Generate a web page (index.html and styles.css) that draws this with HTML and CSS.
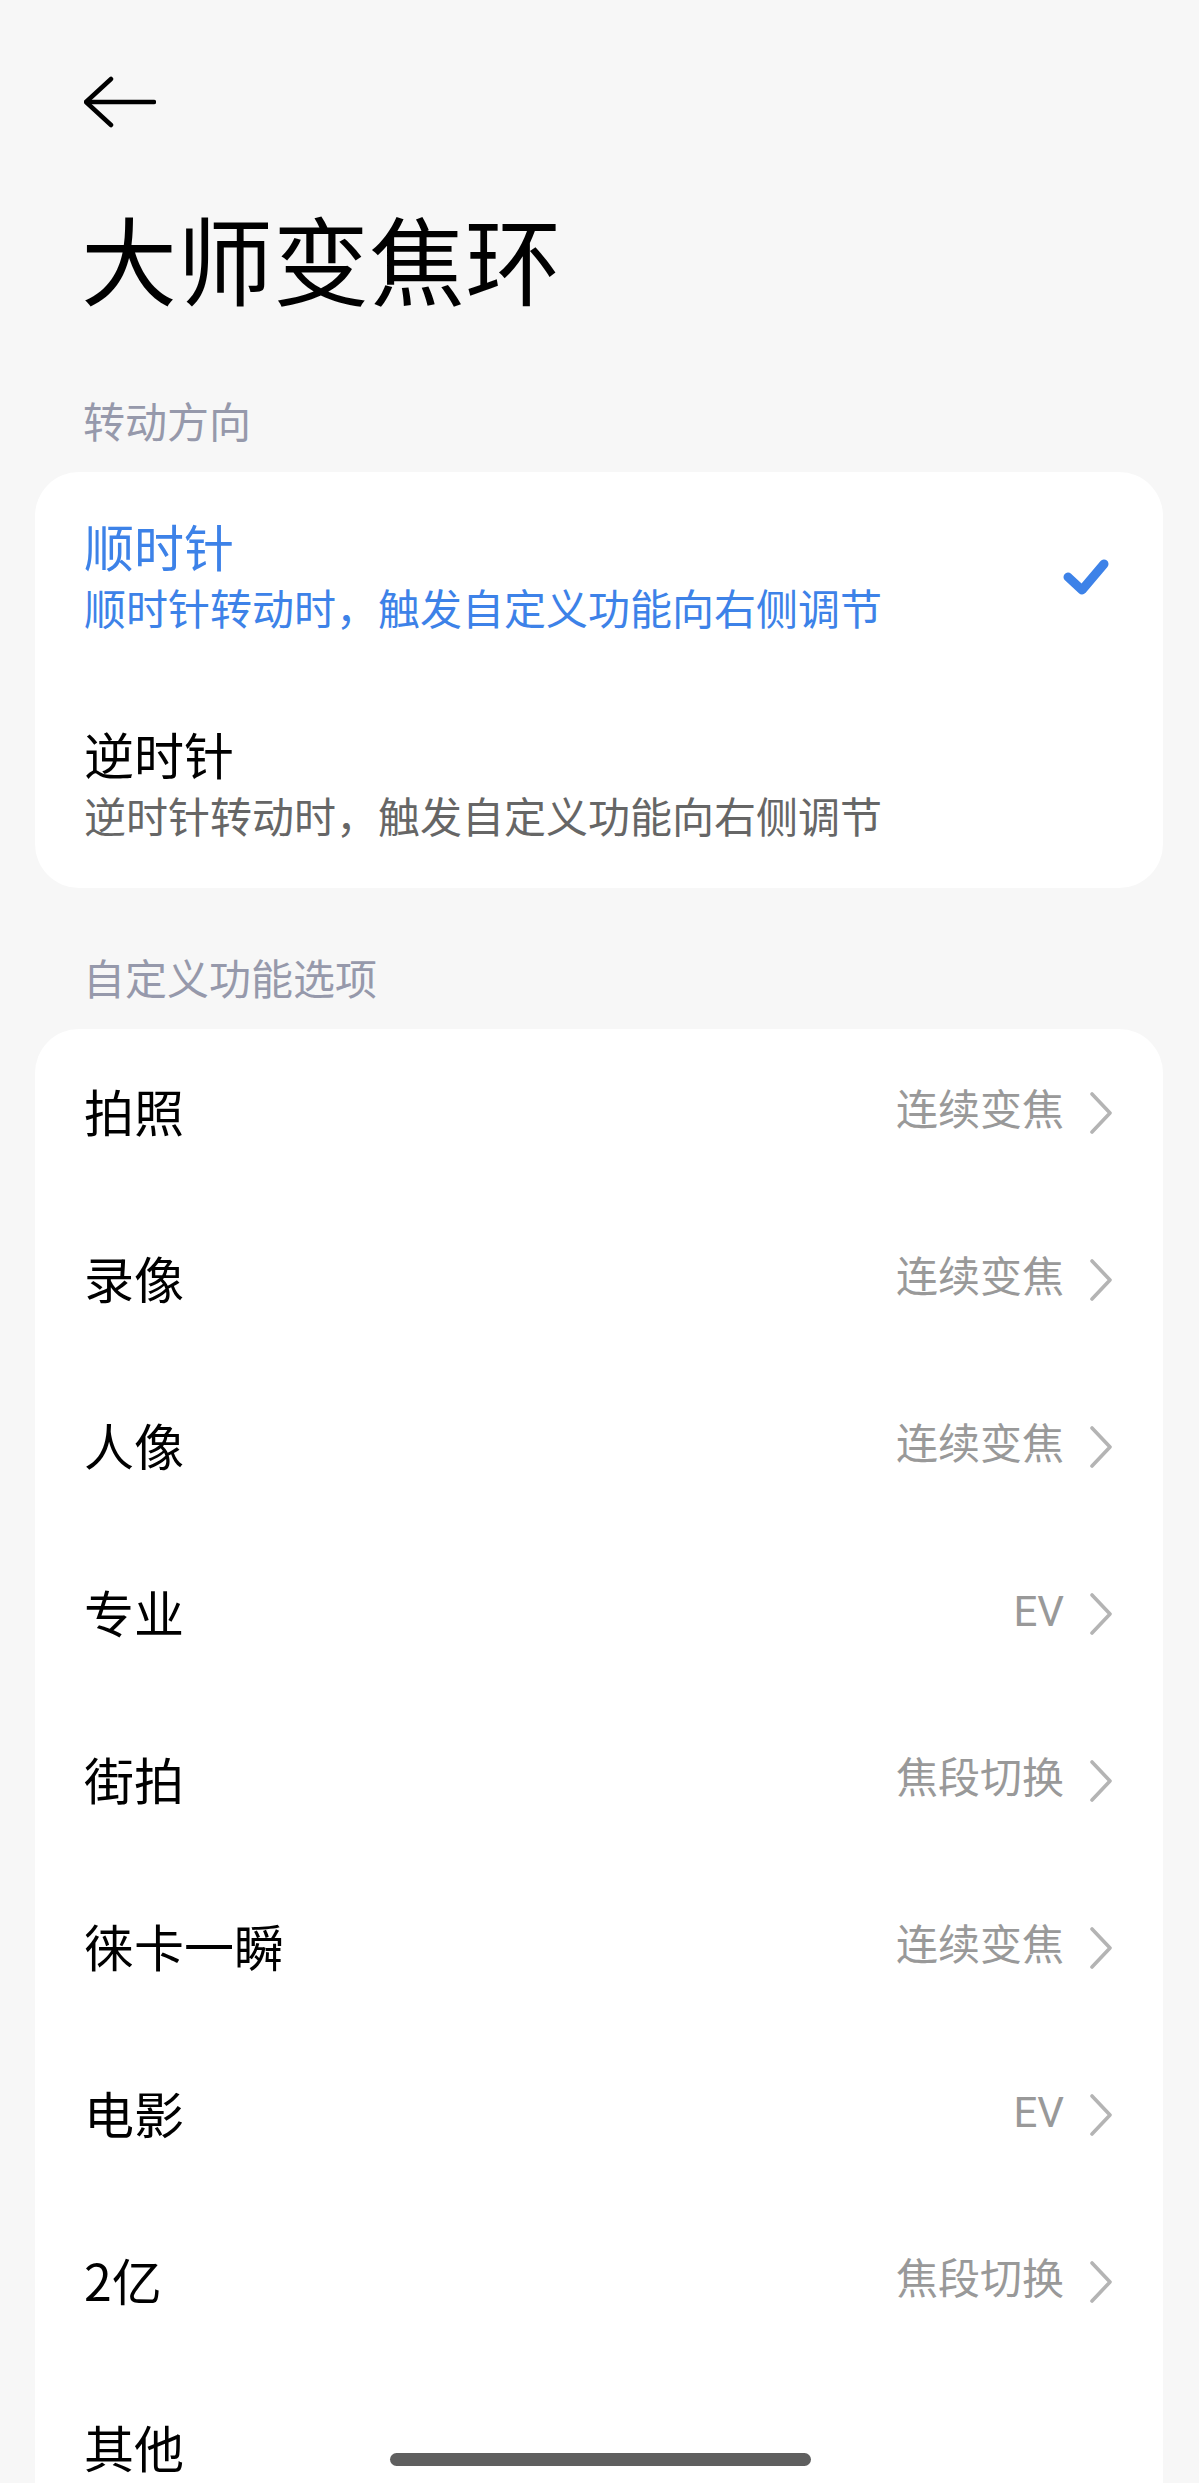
FILE: index.html
```html
<!DOCTYPE html>
<html lang="zh-CN">
<head>
  <meta charset="UTF-8">
  <meta name="viewport" content="width=device-width, initial-scale=1.0">
  <title>大师变焦环</title>
  <link rel="stylesheet" href="styles.css">
</head>
<body>

<div class="page">
  <div class="nav">
    <svg class="back" width="72" height="52" viewBox="0 0 72 52" fill="none" stroke="#000" stroke-width="4.5" stroke-linecap="round" stroke-linejoin="round">
      <polyline points="27,3 2,26 27,49"/>
      <line x1="3" y1="26" x2="70" y2="26"/>
    </svg>
  </div>

  <h1 class="title">大师变焦环</h1>

  <div class="section-label">转动方向</div>
  <div class="card">
    <div class="option active">
      <div class="option-text">
        <div class="option-title">顺时针</div>
        <div class="option-desc">顺时针转动时，触发自定义功能向右侧调节</div>
      </div>
      <svg class="check" width="48" height="44" viewBox="0 0 48 44" fill="none" stroke="#3d82e8" stroke-width="9" stroke-linecap="round" stroke-linejoin="round">
        <polyline points="6,22 20,35 42,9"/>
      </svg>
    </div>
    <div class="option">
      <div class="option-text">
        <div class="option-title">逆时针</div>
        <div class="option-desc">逆时针转动时，触发自定义功能向右侧调节</div>
      </div>
    </div>
  </div>

  <div class="section-label second">自定义功能选项</div>
  <div class="card list" id="modeList">
    <!-- 模式列表 -->
  </div>
</div>

<div class="home-bar"></div>

<script>
  const modes = [
    { name: "拍照", value: "连续变焦" },
    { name: "录像", value: "连续变焦" },
    { name: "人像", value: "连续变焦" },
    { name: "专业", value: "EV" },
    { name: "街拍", value: "焦段切换" },
    { name: "徕卡一瞬", value: "连续变焦" },
    { name: "电影", value: "EV" },
    { name: "2亿", value: "焦段切换" },
    { name: "其他", value: "" }
  ];

  const modeList = document.getElementById('modeList');

  function createRow(mode) {
    const row = document.createElement('div');
    row.classList.add('row');
    let right = '';
    if (mode.value) {
      right = `
        <span class="row-value">${mode.value}</span>
        <svg class="chevron" width="24" height="42" viewBox="0 0 24 42" fill="none" stroke="#b4b4b4" stroke-width="3.6" stroke-linecap="round" stroke-linejoin="round">
          <polyline points="3,2 21,21 3,40"/>
        </svg>`;
    }
    row.innerHTML = `<span class="row-label">${mode.name}</span>${right}`;
    return row;
  }

  modes.forEach(mode => {
    modeList.appendChild(createRow(mode));
  });
</script>

</body>
</html>
```

FILE: styles.css
```css
/* 基本样式 */
html, body {
  margin: 0;
  padding: 0;
  height: 2483px;
  overflow: hidden;
}
body {
  position: relative;
  background-color: #f7f7f7;
  font-family: "Noto Sans CJK SC", "Noto Sans", sans-serif;
  color: #000;
}
.page {
  padding: 0 36px 0 35px;
}
.nav {
  padding: 76px 0 0 49px;
  height: 52px;
}
.nav .back {
  display: block;
}
.title {
  margin: 81px 0 0 46px;
  font-size: 96px;
  line-height: 96px;
  font-weight: 400;
}
.section-label {
  margin: 94px 0 0 48px;
  font-size: 42px;
  line-height: 42px;
  color: #9699ab;
}
.section-label.second {
  margin-top: 68px;
}
.card {
  margin-top: 31px;
  background-color: #fff;
  border-radius: 44px;
  overflow: hidden;
}

/* 转动方向 */
.option {
  display: flex;
  align-items: center;
  padding: 48px 53px 53px 49px;
}
.option-text {
  flex: 1;
}
.option-title {
  font-size: 50px;
  line-height: 50px;
}
.option-desc {
  margin-top: 16px;
  font-size: 42px;
  line-height: 41px;
  color: #666;
}
.option.active .option-title,
.option.active .option-desc {
  color: #3d82e8;
}
.option .check {
  display: block;
  margin-top: 6px;
}

/* 自定义功能选项 */
.row {
  display: flex;
  align-items: center;
  height: 167px;
  padding: 0 50px 0 49px;
}
.row-label {
  flex: 1;
  padding-bottom: 6px;
  font-size: 50px;
  line-height: 50px;
}
.row-value {
  padding-bottom: 4px;
  font-family: Roboto, "Noto Sans CJK SC", sans-serif;
  font-size: 42px;
  line-height: 42px;
  color: #999;
}
.row .chevron {
  display: block;
  margin-left: 25px;
}

.home-bar {
  position: absolute;
  left: 50%;
  top: 2453px;
  width: 421px;
  height: 13px;
  margin-left: -210px;
  border-radius: 7px;
  background-color: #5f5f5f;
}
```
